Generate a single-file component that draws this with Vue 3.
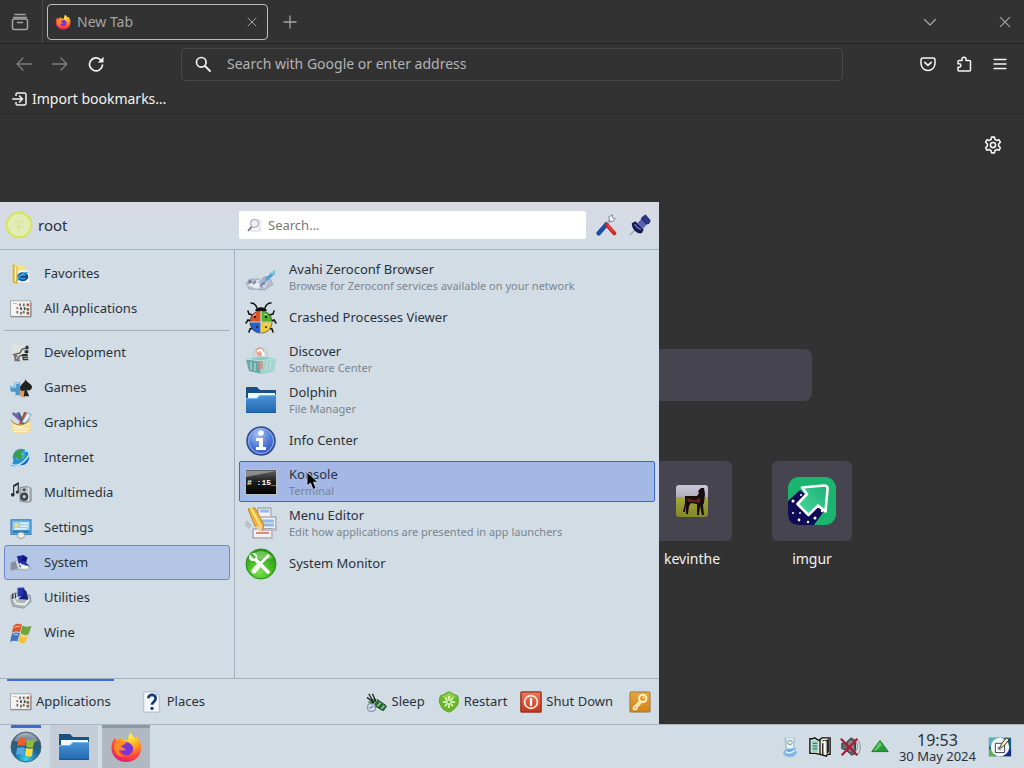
<script setup>
import { ref } from 'vue'

const places = [
  { icon: 'favorites', label: 'Favorites' },
  { icon: 'grid', label: 'All Applications' },
]
const categories = [
  { icon: 'development', label: 'Development' },
  { icon: 'games', label: 'Games' },
  { icon: 'graphics', label: 'Graphics' },
  { icon: 'internet', label: 'Internet' },
  { icon: 'multimedia', label: 'Multimedia' },
  { icon: 'settings', label: 'Settings' },
  { icon: 'system', label: 'System' },
  { icon: 'utilities', label: 'Utilities' },
  { icon: 'wine', label: 'Wine' },
]
const apps = [
  { icon: 'avahi', label: 'Avahi Zeroconf Browser', note: 'Browse for Zeroconf services available on your network' },
  { icon: 'bug', label: 'Crashed Processes Viewer' },
  { icon: 'discover', label: 'Discover', note: 'Software Center' },
  { icon: 'folder', label: 'Dolphin', note: 'File Manager' },
  { icon: 'info', label: 'Info Center' },
  { icon: 'konsole', label: 'Konsole', note: 'Terminal' },
  { icon: 'menuedit', label: 'Menu Editor', note: 'Edit how applications are presented in app launchers' },
  { icon: 'monitor', label: 'System Monitor' },
]
const power = [
  { icon: 'sleep', label: 'Sleep' },
  { icon: 'restart', label: 'Restart' },
  { icon: 'shutdown', label: 'Shut Down' },
]
const sites = [
  { icon: 'horse', label: 'kevinthe', size: 'small' },
  { icon: 'imgur', label: 'imgur', size: 'large' },
]
const tray = ['device', 'clipboard', 'muted', 'expand']

const category = ref('System')
const app = ref('Konsole')
const address = ref('')
const query = ref('')
const pageQuery = ref('')
</script>

<template>
  <div class="desktop">
    <svg class="defs" aria-hidden="true">
      <defs>
        <linearGradient id="gFolder" x1="0" y1="0" x2="0" y2="1"><stop offset="0" stop-color="#4a94d8" /><stop offset="1" stop-color="#2267ae" /></linearGradient>
        <radialGradient id="gFox" cx=".65" cy=".15" r=".9"><stop offset="0" stop-color="#fff04a" /><stop offset=".4" stop-color="#ffa01f" /><stop offset=".72" stop-color="#ff4a38" /><stop offset="1" stop-color="#e0186e" /></radialGradient>
        <radialGradient id="gOrb" cx=".5" cy=".9" r=".9"><stop offset="0" stop-color="#35d4f5" /><stop offset=".45" stop-color="#17689b" /><stop offset=".8" stop-color="#3d5568" /><stop offset="1" stop-color="#a4b5c0" /></radialGradient>
        <radialGradient id="gInfo" cx=".4" cy=".25" r=".8"><stop offset="0" stop-color="#a6c3f7" /><stop offset=".6" stop-color="#4b77d6" /><stop offset="1" stop-color="#3056b4" /></radialGradient>
        <radialGradient id="gGreen" cx=".45" cy=".75" r=".8"><stop offset="0" stop-color="#7be24b" /><stop offset=".6" stop-color="#3db21f" /><stop offset="1" stop-color="#238a10" /></radialGradient>
        <radialGradient id="gGlobe" cx=".4" cy=".35" r=".8"><stop offset="0" stop-color="#8fe0fa" /><stop offset=".5" stop-color="#1f8fd6" /><stop offset="1" stop-color="#0b3f96" /></radialGradient>
        <linearGradient id="gRed" x1="0" y1="0" x2="0" y2="1"><stop offset="0" stop-color="#ee7a5c" /><stop offset="1" stop-color="#c6341a" /></linearGradient>
        <linearGradient id="gGold" x1="0" y1="0" x2="0" y2="1"><stop offset="0" stop-color="#e9a83e" /><stop offset="1" stop-color="#cf8318" /></linearGradient>
        <linearGradient id="gTerm" x1="0" y1="0" x2="0" y2="1"><stop offset="0" stop-color="#666" /><stop offset=".5" stop-color="#1c1c1c" /><stop offset="1" stop-color="#000" /></linearGradient>
        <linearGradient id="gSky" x1="0" y1="0" x2="0" y2="1"><stop offset="0" stop-color="#c9c8d8" /><stop offset=".36" stop-color="#b3aebb" /><stop offset=".38" stop-color="#a6a83c" /><stop offset="1" stop-color="#838727" /></linearGradient>
        <linearGradient id="gArrow" x1="0" y1="1" x2="1" y2="0"><stop offset="0" stop-color="#4ad8a2" /><stop offset="1" stop-color="#1cb071" /></linearGradient>
      </defs>

      <symbol id="firefoxview" viewBox="0 0 18 18"><path d="M4 1.5h10M2.5 4.5h13" stroke="currentColor" stroke-width="1.4" stroke-linecap="round" /><rect x="1.5" y="6" width="15" height="10.5" rx="2" fill="none" stroke="currentColor" stroke-width="1.5" /><path d="M6.5 9.5h5" stroke="currentColor" stroke-width="1.6" stroke-linecap="round" /></symbol>
      <symbol id="close" viewBox="0 0 12 12"><path d="M2 2l8 8M10 2l-8 8" stroke="currentColor" stroke-width="1" stroke-linecap="round" /></symbol>
      <symbol id="plus" viewBox="0 0 14 14"><path d="M7 1v12M1 7h12" stroke="currentColor" stroke-width="1.3" stroke-linecap="round" /></symbol>
      <symbol id="chevron" viewBox="0 0 14 14"><path d="M1.500 4.500L7 10l5.500-5.500" fill="none" stroke="currentColor" stroke-width="1.300" stroke-linecap="round" stroke-linejoin="round" /></symbol>
      <symbol id="back" viewBox="0 0 16 16"><path d="M15.500 8H1M7 2L1 8l6 6" fill="none" stroke="currentColor" stroke-width="1.300" stroke-linecap="round" stroke-linejoin="round" /></symbol>
      <symbol id="forward" viewBox="0 0 16 16"><path d="M.5 8H15M9 2l6 6-6 6" fill="none" stroke="currentColor" stroke-width="1.300" stroke-linecap="round" stroke-linejoin="round" /></symbol>
      <symbol id="reload" viewBox="0 0 16 16"><path d="M13 4.200A6.500 6.500 0 1 0 14.500 9" fill="none" stroke="currentColor" stroke-width="1.700" stroke-linecap="round" /><path d="M15.500.8v5.700H9.800z" fill="currentColor" /></symbol>
      <symbol id="magnifier" viewBox="0 0 16 16"><circle cx="6.300" cy="6.300" r="4.800" fill="none" stroke="currentColor" stroke-width="1.700" /><path d="M10 10l5 5" stroke="currentColor" stroke-width="1.800" stroke-linecap="round" /></symbol>
      <symbol id="pocket" viewBox="0 0 16 16"><path d="M3 2h10a2 2 0 0 1 2 2v3.500a7 7 0 0 1-14 0V4a2 2 0 0 1 2-2z" fill="none" stroke="currentColor" stroke-width="1.500" /><path d="M4.800 6.300L8 9.300l3.200-3" fill="none" stroke="currentColor" stroke-width="1.600" stroke-linecap="round" stroke-linejoin="round" /></symbol>
      <symbol id="puzzle" viewBox="0 0 16 16"><path d="M6 4.500V3.200a2 2 0 0 1 4 0V4.500h3.500a1 1 0 0 1 1 1V14a1 1 0 0 1-1 1H3a1 1 0 0 1-1-1v-2.800h1.200a1.700 1.700 0 0 0 0-3.400H2V5.500a1 1 0 0 1 1-1z" fill="none" stroke="currentColor" stroke-width="1.500" stroke-linejoin="round" /></symbol>
      <symbol id="burger" viewBox="0 0 16 16"><path d="M2 3.500h12M2 8h12M2 12.500h12" stroke="currentColor" stroke-width="1.300" stroke-linecap="round" /></symbol>
      <symbol id="import" viewBox="0 0 16 16"><path d="M4 5V3.500A1.500 1.500 0 0 1 5.500 2h7A1.500 1.500 0 0 1 14 3.500v9a1.500 1.500 0 0 1-1.500 1.500h-7A1.500 1.500 0 0 1 4 12.500V11" fill="none" stroke="currentColor" stroke-width="1.500" /><path d="M.7 8H10M7.500 5l3 3-3 3" fill="none" stroke="currentColor" stroke-width="1.500" stroke-linecap="round" /></symbol>
      <symbol id="gear" viewBox="0 0 16 16"><path d="M6.700 1h2.600l.5 2.100 1.400.8 2.100-.6 1.300 2.300L13 7.100v1.800l1.600 1.500-1.300 2.300-2.100-.6-1.400.8-.5 2.100H6.700l-.5-2.100-1.400-.8-2.100.6-1.300-2.300L3 8.900V7.100L1.400 5.600l1.300-2.300 2.100.6 1.400-.8z" fill="none" stroke="currentColor" stroke-width="1.400" stroke-linejoin="round" /><circle cx="8" cy="8" r="2.300" fill="none" stroke="currentColor" stroke-width="1.400" /></symbol>
      <symbol id="firefox" viewBox="0 0 32 32"><path d="M4.500 7l3 3c1-2 2.500-3 4-3.500 0 1 .5 2 1.500 2.500h5c0-3 .5-6 3-8 .5 3 2.500 4 4.500 6 .8-.3 1-1.200.9-2 3.600 4 5.100 8 4.600 13C30.500 26 24 31 16 31S1.500 25 1.500 17c0-4 1-7 3-10z" fill="url(#gFox)" /><path d="M10 14c2-2 5-1 6-3 5 1 8 4 7 8s-5 6-8 5-5-3-5-6c2 1.500 4 1.500 6 0-3 0-4-2-6-4z" fill="#7a35d8" /><path d="M7 10c4-1 6 1 9 2-1 2-4 2-5 3 1 2 3 3 5 3-2 2-5 2-7 0-1 4 2 7 6 7-6 2-11-3-11-9 0-2 1-4 3-6z" fill="#ff8a28" /></symbol>

      <symbol id="horse" viewBox="0 0 32 32"><rect width="32" height="32" rx="3" fill="url(#gSky)" /><path d="M9 11h12l2-3-1-2 3-3h3l1 6-1 9-1 2 1 10h-2l-2-9-1 9h-2V19l-6-1-2 3-1 8h-2v-9l-1 7H7l2-9z" fill="#180c0c" /><path d="M11 13l7 2 6-2v5l-6-1h-6z" fill="#671b1b" /></symbol>
      <symbol id="imgur" viewBox="0 0 48 48"><rect width="48" height="48" rx="11" fill="#1cb570" /><path d="M0 24l12-11 24 21-10 14H11C4 48 0 44 0 37z" fill="#0f0b54" /><path d="M14 10.500l22-2q4 0 3.500 4l-2 22-7.500-6-9.500 9.500-11-11L19 17z" fill="url(#gArrow)" stroke="#fff" stroke-width="2.600" stroke-linejoin="round" /><g fill="#fff"><circle cx="5" cy="24" r="1.500" /><circle cx="13" cy="18" r="1" /><circle cx="5" cy="36" r="1" /><circle cx="11" cy="43" r="1.400" /><circle cx="20" cy="45" r="1.200" /><circle cx="27" cy="41" r="1.500" /><circle cx="34" cy="34" r="1.200" /><circle cx="12" cy="36" r=".9" /></g></symbol>

      <symbol id="avatar" viewBox="0 0 32 32"><circle cx="16" cy="16" r="14" fill="#e3ecb8" stroke="#d5e657" stroke-width="2.500" /><path d="M11 13c3-2 7-2 10 0M16 12v9M13 18h6" fill="none" stroke="#d9e690" stroke-width="1.500" /></symbol>
      <symbol id="seeker" viewBox="0 0 16 16"><rect x="5" y="3" width="9" height="11" fill="#f8f8fb" stroke="#d6d6e0" /><circle cx="8.500" cy="6.500" r="4" fill="#f0f0f8" stroke="#9d9bb4" /><path d="M5.500 10L2 14" stroke="#6d6b76" stroke-width="1.600" /></symbol>
      <symbol id="tools" viewBox="0 0 24 24"><path d="M13 11l5-6" stroke="#a9b2ba" stroke-width="3" /><path d="M15 3l4-2 0 3 3 1-2 3-4 0z" fill="#eef1f4" stroke="#7b858d" /><path d="M11 9l3 4" stroke="#566572" stroke-width="2" /><path d="M12 12L4 21" stroke="#164fa3" stroke-width="5" stroke-linecap="round" /><path d="M13 12l8 9" stroke="#d42628" stroke-width="4.500" stroke-linecap="round" /><path d="M14 12l6 7" stroke="#f46b62" stroke-width="1" /></symbol>
      <symbol id="pin" viewBox="0 0 24 24"><path d="M7 17l-6 6" stroke="#a4a9b2" stroke-width="1.500" /><path d="M3 10l4-2 9 9-2 4c-5 1-11-4-11-11z" fill="#15194e" /><path d="M9 10l5-5 6 6-5 5z" fill="#5862b8" /><path d="M14 4l4-3 5 6-1 3-3 1-5-5z" fill="#2e378b" stroke="#181e59" /><path d="M6 11c2 3 4 5 7 6" stroke="#737fd0" stroke-width="1.500" fill="none" /></symbol>

      <symbol id="favorites" viewBox="0 0 24 24"><path d="M3 1l8 2h5v18H9l-6 2z" fill="#f5e17a" /><path d="M3 1l5 3v19l-5-2z" fill="#d3af36" /><path d="M5 3l2 1v17l-2-1z" fill="#fff3ae" /><rect x="9" y="8" width="12" height="13" fill="#f6f8fa" /><ellipse cx="14" cy="15" rx="5" ry="4" fill="#3d9ade" stroke="#154f94" stroke-width="2" /><path d="M10 15h9" stroke="#143f7a" stroke-width="2" /><path d="M8 20C8 15 14 10 20 10" stroke="#3bb6e8" stroke-width="1.500" fill="none" /></symbol>
      <symbol id="grid" viewBox="0 0 24 20"><rect x=".5" y="1" width="22" height="17" fill="#f4f4f1" stroke="#a4a6ab" /><path d="M1 18.500h22V3" fill="none" stroke="#807c83" /><path d="M3 4h4l2 2" fill="none" stroke="#b6bac2" /><g><path d="M10 4h2v3h-2zM7 12h2v3H7z" fill="#71758a" /><path d="M14 4h2v3h-2zM14 12h2v3h-2z" fill="#65744d" /><path d="M18 4h3v3h-3zM7 8h2v2H7z" fill="#ab5b45" /><path d="M11 8h2v3h-2zM15 8h2v3h-2z" fill="#444d60" /><path d="M11 13h2v3h-2zM18 9h3v3h-3zM18 13h3v3h-3z" fill="#89634c" /></g></symbol>
      <symbol id="development" viewBox="0 0 24 24"><rect x="2" y="3" width="18" height="17" fill="#e0e2df" /><path d="M3 14l8-2 2-4 7-2M7 20l4-5 8-2" stroke="#575c59" stroke-width="1.500" fill="none" /><path d="M17 4h3v4h-3zM16 9h4v3h-4zM13 13h6l1 7h-6z" fill="#2b302e" /><path d="M4 13l5 2-3 3 5 1v2H5z" fill="#6e7572" /><path d="M14 16h5M15 18h5" stroke="#a9b7ad" /></symbol>
      <symbol id="games" viewBox="0 0 24 24"><path d="M0 10h5V6h6v5h4v5h-4v4H6v-4H1z" fill="#4b98d3" /><path d="M1 11h5V7h4" fill="none" stroke="#9ed2f2" stroke-width="1.500" /><path d="M11 12l6 2-1 9-5-2z" fill="#d99d6a" /><path d="M17 2c0 4-6 6-6 10 0 4 4 4 5 2l-1 7h6l-3-7c2 2 6 0 6-3 0-4-7-5-7-9z" fill="#202321" /></symbol>
      <symbol id="graphics" viewBox="0 0 24 24"><path d="M3 1l13 12M6 2l10 10" stroke="#7460ab" stroke-width="3" /><path d="M17 0l-6 14" stroke="#b1502c" stroke-width="3" /><path d="M9 0l6 13" stroke="#315d8c" stroke-width="2" /><path d="M19 1l4 2-6 9-4-1z" fill="#e7f2fa" stroke="#779bb8" /><path d="M1 9c7 7 16 5 21-1l1 10c0 3-3 5-7 5H6c-3 0-5-2-5-5z" fill="#f2dc98" /><path d="M3 14c5 3 12 2 18-1M3 18h18M4 21h15" stroke="#fff1bd" stroke-width="1.500" fill="none" /><path d="M1 9c7 8 15 6 21-1" stroke="#9b6d32" fill="none" /></symbol>
      <symbol id="internet" viewBox="0 0 24 24"><circle cx="12" cy="11" r="9" fill="url(#gGlobe)" /><path d="M7 4c4-2 7-1 8 1l-3 2 2 3-3 5-3-3-4-1c0-3 1-5 3-7zM16 9l3 1-2 5z" fill="#3c9e48" /><path d="M1 20c4 4 19-3 21-14-3 6-13 12-18 9z" fill="#318bd9" /><path d="M1 17c3 7 17 1 21-12M16 5l7-3" fill="none" stroke="#b7e6fb" stroke-width="1.700" /></symbol>
      <symbol id="multimedia" viewBox="0 0 24 24"><path d="M4 14V4l5-3v9M4 5l5-3" stroke="#26292c" stroke-width="1.200" fill="none" /><circle cx="3" cy="14" r="2" fill="#282b2d" /><circle cx="8" cy="11" r="1.700" fill="#282b2d" /><path d="M11 6l9-1 3 2v14l-4 1-8-1z" fill="#b9bfc3" stroke="#7b8185" /><path d="M20 5v16" stroke="#e5e9ec" /><circle cx="15.500" cy="16" r="4" fill="#4f5559" stroke="#252c31" /><circle cx="15.500" cy="16" r="1.500" fill="#d3dce1" /><circle cx="15.500" cy="8.500" r="1.500" fill="#373e42" /></symbol>
      <symbol id="settings" viewBox="0 0 24 24"><rect x="1" y="3" width="22" height="16" fill="#62aadd" stroke="#397baf" /><path d="M3 5h18v10H3z" fill="#9bd0ee" /><circle cx="7" cy="9" r="2.500" fill="#efd97d" /><path d="M11 7h9M11 10h9M5 13h13" stroke="#f4fbff" stroke-width="1.500" /><path d="M3 16h18" stroke="#267fbd" stroke-width="3" /><ellipse cx="12" cy="20" rx="4" ry="3.500" fill="#eceae3" stroke="#949999" /></symbol>
      <symbol id="system" viewBox="0 0 24 24"><path d="M1 12l7-3 6 4 9 5-5 2-8-1-9 1z" fill="#d5dce0" stroke="#9aa4ad" /><path d="M1 12l5-2 3 8-8 2z" fill="#888f9e" /><path d="M7 4l7-1 3 8-8 2z" fill="#1d269d" stroke="#b9caef" /><path d="M14 3l5 3-2 8-4-4z" fill="#0b1681" /><path d="M10 14l5-5 7 7-8-3-3 4z" fill="#253799" /><path d="M11 13l4 4 5-1" stroke="#fff" stroke-width="2" fill="none" /></symbol>
      <symbol id="utilities" viewBox="0 0 24 24"><path d="M1 9l5-3 16 3 1 7-8 7-12-2-2-8z" fill="#aeb6b9" stroke="#8b969c" /><path d="M2 9l6 5 8-4-5-4z" fill="#e7eef2" /><path d="M3 12l4 6 9 1 5-6" fill="none" stroke="#ecefef" stroke-width="2" /><path d="M8 1l7-1 2 10-9 1z" fill="#2631ac" stroke="#91a8da" /><path d="M14 1l4 4 2 9-11-1 6-5z" fill="#15227d" /><path d="M3 7v6M6 7v5" stroke="#2f3639" stroke-width="1.500" /></symbol>
      <symbol id="wine" viewBox="0 0 24 24"><path d="M4 4c3-3 6-2 9-1l-2 8c-3-1-6-1-9 1z" fill="#dd5426" /><path d="M13.500 4c3 1 6 2 10 0l-3 9c-3 2-6 1-9-1z" fill="#6fa53a" /><path d="M2 13c3-2 6-2 9-1l-3 9c-3-1-5-1-8 1z" fill="#3f76bf" /><path d="M11.500 13c3 1 5 2 8.500 0l-3 9c-3 2-5 1-8-1z" fill="#f2c230" /><path d="M5 6c2-2 4-1 6-1M12 15l6 1M4 14c2-1 3-1 5 0" stroke="#fff" stroke-width="1.500" opacity=".5" fill="none" /></symbol>

      <symbol id="avahi" viewBox="0 0 32 32"><path d="M1 22l5-4h19l3 5-8 6-16-1z" fill="#b8bfcc" stroke="#a4aabb" /><path d="M4 18l5 4-6 3zM13 20l5-3 4 7-6 2z" fill="#737c93" /><path d="M2 24l10-5 8 3-8 6z" fill="#e8ebf0" /><path d="M12 22l7-8 5 1-4 11z" fill="#aab7cf" stroke="#e7edf2" /><path d="M20 17L30 9v4l-9 8z" fill="#55a4cf" /><path d="M24 12l6-3-1 5z" fill="#86cbe0" /><path d="M8 23l3-3M15 25l5-4" stroke="#7880a8" stroke-width="2" /></symbol>
      <symbol id="bug" viewBox="0 0 32 32"><g fill="none" stroke="#111" stroke-width="1.500" stroke-linecap="round"><path d="M12 6C11 3 9 1 6 1M20 6c1-3 3-5 6-5M8 13L4 12l-1-3M24 13l4-1 1-3M6 19l-3-1-2 3M26 19l3-1 2 3M9 26l-4 1-1 3M23 26l4 1 1 3" /></g><path d="M10 9c1-5 11-5 12 0z" fill="#111" /><path d="M16 9v11H5c0-6 4-11 11-11z" fill="#e1542a" stroke="#222" stroke-width=".6" /><path d="M16 9v11h11c0-6-4-11-11-11z" fill="#50b42c" stroke="#222" stroke-width=".6" /><path d="M5 20h11v11C9 31 5 26 5 20z" fill="#2762ca" stroke="#222" stroke-width=".6" /><path d="M27 20H16v11c7 0 11-5 11-11z" fill="#f5cc30" stroke="#222" stroke-width=".6" /><path d="M16 9v22M5 20h22" stroke="#f3eeda" stroke-width="1.200" /><g fill="#26211f"><circle cx="10" cy="15" r="1.200" /><circle cx="21" cy="15" r="1.200" /><circle cx="12" cy="25" r="1" /><circle cx="21" cy="25" r="1" /></g><path d="M8 14l3-2M19 12l3 1M20 23l2-1" stroke="#fff" opacity=".6" /></symbol>
      <symbol id="discover" viewBox="0 0 32 32"><path d="M9 18v-7c0-8 13-8 13 0v7" fill="none" stroke="#c2d0d0" stroke-width="2" /><path d="M11 9h8v9h-8z" fill="#eef0e8" /><path d="M11 6l4-2 4 3-2 6-5 1z" fill="#e7a083" /><path d="M12 8l4-1 3 6" stroke="#fff" stroke-width="2" fill="none" /><path d="M1 16l14-3 16 2-2 13-13 3-12-3z" fill="#8ec9c4" /><path d="M1 16l14 2v12L4 28z" fill="#67a5a6" /><path d="M15 18l16-3-2 13-13 2z" fill="#a2d6cf" /><path d="M1 16l14-3 16 2-15 3z" fill="none" stroke="#c1e2de" /><path d="M13 18h5v8h-5z" fill="#c98e80" opacity=".7" /><path d="M6 19v8M10 20v8M22 19l-1 9M26 18l-1 9" stroke="#c4e5df" /></symbol>
      <symbol id="folder" viewBox="0 0 32 28"><path d="M1 1h11l3 3h16v22H1z" fill="#195183" /><path d="M3 7h27v12H3z" fill="#edf8ff" /><path d="M1 12h11l3-3h16v18H1z" fill="url(#gFolder)" /><path d="M1 12.500h11l3-3h16" fill="none" stroke="#77b6ed" /><path d="M1 26.500h30" stroke="#195995" /></symbol>
      <symbol id="info" viewBox="0 0 32 32"><circle cx="16" cy="16" r="14" fill="url(#gInfo)" stroke="#304b8c" stroke-width="1.500" /><circle cx="16" cy="16" r="12.500" fill="none" stroke="#97b4ef" /><circle cx="16" cy="8" r="2.800" fill="#fff" /><path d="M11 13h7v9h3v3H11v-3h3v-6h-3z" fill="#fff" /></symbol>
      <symbol id="konsole" viewBox="0 0 32 26"><rect x=".5" y=".5" width="31" height="25" fill="url(#gTerm)" stroke="#bbbfc6" /><path d="M1 2h30L1 8z" fill="#aaa" opacity=".65" /><text x="2" y="16" class="term"># :15_</text></symbol>
      <symbol id="menuedit" viewBox="0 0 32 32"><path d="M1 13l6 5-3 4-4-3z" fill="#b9c2c8" /><path d="M13 1h13v9H13zM14 10h17v12H14zM8 22h19v9H8z" fill="#f1f1ee" stroke="#858c98" /><path d="M26 2v8H13M31 13v10H14M27 23v8H9" stroke="#b9bcc5" stroke-width="2" fill="none" /><path d="M15 4h9M16 14h13M16 18h13" stroke="#95b9eb" stroke-width="3" /><path d="M11 26h13" stroke="#d98a78" stroke-width="2" /><path d="M3 2l7-1 9 17-2 6-7-5z" fill="#f2b337" stroke="#bf812c" /><path d="M6 1l10 19" stroke="#ffe78a" stroke-width="2" /><path d="M10 20l7-2v7z" fill="#ead1a3" /></symbol>
      <symbol id="monitor" viewBox="0 0 32 32"><circle cx="16" cy="16" r="15" fill="url(#gGreen)" stroke="#278b17" /><path d="M4 10c5-9 19-9 24 0-7 2-12 2-24 0z" fill="#bfeab0" opacity=".45" /><path d="M9 10l14 14" stroke="#fff" stroke-width="3.500" stroke-linecap="round" /><path d="M24 7L13 18" stroke="#fff" stroke-width="2.500" /><path d="M15 16l-6 7" stroke="#f6faf2" stroke-width="5" stroke-linecap="round" /><circle cx="8" cy="9" r="4" fill="#fff" /><path d="M5 5l5 5" stroke="#54b73a" stroke-width="3" /></symbol>

      <symbol id="places" viewBox="0 0 20 24"><path d="M1 1h13l4 4v18H1z" fill="#f5f8fa" stroke="#a7b7c6" /><path d="M14 1v4h4" fill="#bed3e9" /><path d="M6 8c0-5 8-5 8 0 0 4-4 4-4 7" fill="none" stroke="#17397e" stroke-width="3" /><circle cx="10" cy="19" r="1.800" fill="#17397e" /></symbol>
      <symbol id="sleep" viewBox="0 0 24 24"><path d="M2 12l7-4 14 9-4 5z" fill="#226838" /><path d="M4 12l4-3M8 14l4-4M12 17l4-4M16 20l4-4" stroke="#88c879" stroke-width="2" /><path d="M3 3l5 9M7 3l4 9M1 7l8 6" stroke="#222b24" stroke-width="1.500" /><path d="M12 9l10 7M7 14l11 7" stroke="#1b2923" /><rect x="2" y="14" width="8" height="8" rx="2" fill="#dce5f5" stroke="#61718c" /><path d="M4 19l4-3" stroke="#8295b8" stroke-width="2" /></symbol>
      <symbol id="restart" viewBox="0 0 24 24"><path d="M3 5c5-1 6-4 9-4s4 3 9 4c2 3 2 9-1 12-2 3-5 5-8 6-4-1-7-3-9-7-2-3-2-8 0-11z" fill="#69b728" stroke="#5aa422" /><path d="M4 6c5-1 6-4 8-4s4 3 8 4c-5 4-12 4-16 0z" fill="#b2e26a" opacity=".6" /><path d="M12 6v4M12 14v4M6 12h4M14 12h4M8 8l2 2M14 14l2 2M16 8l-2 2M10 14l-2 2" stroke="#f5ffdf" stroke-width="1.600" stroke-linecap="round" /></symbol>
      <symbol id="shutdown" viewBox="0 0 24 24"><rect x="1" y="1" width="22" height="22" rx="1" fill="url(#gRed)" stroke="#94311e" stroke-width="1.500" /><circle cx="12" cy="12" r="7" fill="none" stroke="#fff2ec" stroke-width="1.800" /><path d="M12 7.500v9" stroke="#fff" stroke-width="2.500" /></symbol>
      <symbol id="key" viewBox="0 0 24 24"><rect x="1" y="1" width="22" height="22" rx="1" fill="url(#gGold)" stroke="#98743c" /><circle cx="15" cy="8" r="4" fill="none" stroke="#fff0c5" stroke-width="2.200" /><path d="M12 11l-7 7v2h3l1-3 4-4" fill="none" stroke="#fff0c5" stroke-width="1.800" /><circle cx="16" cy="7" r="1" fill="#fff0c5" /></symbol>
      <symbol id="start" viewBox="0 0 32 32"><circle cx="16" cy="16" r="15" fill="url(#gOrb)" stroke="#4c6272" /><path d="M4 10C9 0 23 0 28 10c-8 3-16 1-24 0z" fill="#c0cdd5" opacity=".5" /><path d="M9 8c3-2 5-1 7 0l-1 7c-3-1-5-1-8 0z" fill="#e95f25" /><path d="M17 9c3 1 5 1 8-1l-2 8c-3 1-5 1-7-1z" fill="#8fbd32" /><path d="M7 17c3-1 5-1 8 0l-1 7c-3-1-5-1-8 0z" fill="#51a9e4" /><path d="M16 17c3 1 5 1 7 0l-1 8c-3 1-5 1-7-1z" fill="#ffd83c" /></symbol>
      <symbol id="device" viewBox="0 0 24 24"><path d="M6 2h11v13l3 3-3 4c-5 3-11 0-13-3l3-4z" fill="#8ac0e8" /><path d="M8 2h8v12H8z" fill="#e9f2ef" stroke="#b6cbd2" /><circle cx="12" cy="7" r="2.500" fill="#e2e7d2" stroke="#7599b9" /><path d="M8 15l10-2v5c-4 5-11 4-13-1z" fill="#69abe0" /><path d="M7 17c4 3 9 1 10-2" fill="none" stroke="#d4effa" stroke-width="2" /></symbol>
      <symbol id="clipboard" viewBox="0 0 24 24"><path d="M1 3h3l2-1 5 3 3-3h9v18h-3l-1 2-7-2-5-1H1z" fill="#e8e8dd" stroke="#111" stroke-width="1.500" /><path d="M3 5h7v13H3z" fill="#9fd7c5" /><path d="M4 8h5M4 11h5M4 14h5" stroke="#245c57" /><path d="M12 4v16M15 5h5v14M15 8v13M21 3v15" stroke="#222" stroke-width="1.500" fill="none" /><path d="M17 5v13" stroke="#fff" stroke-width="1.500" /></symbol>
      <symbol id="muted" viewBox="0 0 24 24"><path d="M3 8l5-1 5-5 5 3v14l-4 2-7-6-4-1z" fill="#666d70" stroke="#30383d" /><ellipse cx="13" cy="11" rx="4" ry="7" fill="#848889" stroke="#444" /><path d="M18 6c3 3 3 7 0 11M21 5c3 5 3 10 0 15" fill="none" stroke="#949a9e" stroke-width="1.200" /><path d="M2 3l18 18M20 3L3 21" stroke="#b71537" stroke-width="2.500" /></symbol>
      <symbol id="expand" viewBox="0 0 24 24"><path d="M12 5l9 12H3z" fill="#279c37" stroke="#147527" stroke-linejoin="round" /><path d="M5 16l7-10 2 4-7 6z" fill="#5bd05c" /></symbol>
      <symbol id="peek" viewBox="0 0 26 24"><rect x="1" y="2" width="24" height="20" fill="#145c7c" /><path d="M1 2h12L1 12z" fill="#54b2bf" /><path d="M25 22H13l12-8z" fill="#162c81" /><path d="M1 13v9h9z" fill="#5fae5b" /><circle cx="13" cy="12" r="10" fill="#f2f5f4" /><path d="M8 8h10v10H8z" fill="#fff" stroke="#343a41" /><path d="M11 11v4h4" fill="none" stroke="#8b9197" /><path d="M12 14l3-6 5-6 3 2-6 7z" fill="#f8eeb5" stroke="#24282b" /></symbol>
    </svg>

    <main class="browser">
      <header class="tabbar">
        <button class="view" aria-label="Recent browsing"><svg class="i18"><use href="#firefoxview" /></svg></button>
        <div class="tab">
          <svg class="i16"><use href="#firefox" /></svg><span>New Tab</span>
          <button aria-label="Close tab"><svg class="i12"><use href="#close" /></svg></button>
        </div>
        <button class="add" aria-label="Open a new tab"><svg class="i14"><use href="#plus" /></svg></button>
        <button class="push" aria-label="List all tabs"><svg class="i14"><use href="#chevron" /></svg></button>
        <button class="quit" aria-label="Close window"><svg class="i14"><use href="#close" /></svg></button>
      </header>
      <nav class="toolbar">
        <div class="navbuttons">
          <button class="dim" aria-label="Back"><svg class="i16"><use href="#back" /></svg></button>
          <button class="dim" aria-label="Forward"><svg class="i16"><use href="#forward" /></svg></button>
          <button aria-label="Reload"><svg class="i16"><use href="#reload" /></svg></button>
        </div>
        <label class="address">
          <svg class="i16"><use href="#magnifier" /></svg>
          <input v-model="address" type="text" aria-label="Address" placeholder="Search with Google or enter address" />
        </label>
        <div class="extras">
          <button aria-label="Save to Pocket"><svg class="i16"><use href="#pocket" /></svg></button>
          <button aria-label="Extensions"><svg class="i16"><use href="#puzzle" /></svg></button>
          <button aria-label="Application menu"><svg class="i16"><use href="#burger" /></svg></button>
        </div>
      </nav>
      <div class="bookmarks">
        <button><svg class="i16"><use href="#import" /></svg>Import bookmarks…</button>
      </div>
      <section class="page">
        <button class="customize" aria-label="Personalize new tab"><svg class="i18"><use href="#gear" /></svg></button>
        <input v-model="pageQuery" class="pagesearch" type="text" aria-label="Search the web" />
        <div class="sites">
          <a v-for="s in sites" :key="s.label" href="#" class="site">
            <span class="tile"><svg :class="s.size"><use :href="'#' + s.icon" /></svg></span>
            {{ s.label }}
          </a>
        </div>
      </section>
    </main>

    <aside class="launcher">
      <header class="head">
        <button class="user"><svg class="i28"><use href="#avatar" /></svg>root</button>
        <div class="find">
          <label class="searchbox">
            <svg class="i16"><use href="#seeker" /></svg>
            <input v-model="query" type="text" aria-label="Search applications" placeholder="Search..." />
          </label>
          <button aria-label="Configure"><svg class="i22"><use href="#tools" /></svg></button>
          <button aria-label="Keep open"><svg class="i22"><use href="#pin" /></svg></button>
        </div>
      </header>
      <div class="body">
        <nav class="side">
          <button v-for="c in places" :key="c.label" class="cat" @click="category = c.label">
            <svg class="i22"><use :href="'#' + c.icon" /></svg><span class="name">{{ c.label }}</span>
          </button>
          <hr />
          <button v-for="c in categories" :key="c.label" class="cat" :class="{ on: category === c.label }" @click="category = c.label">
            <svg class="i22"><use :href="'#' + c.icon" /></svg><span class="name">{{ c.label }}</span>
          </button>
        </nav>
        <div class="apps">
          <button v-for="a in apps" :key="a.label" class="app" :class="{ on: app === a.label }" @mouseenter="app = a.label">
            <svg class="i32"><use :href="'#' + a.icon" /></svg>
            <span class="words"><span :class="{ name: !a.note }">{{ a.label }}</span><small v-if="a.note">{{ a.note }}</small></span>
          </button>
        </div>
      </div>
      <footer class="foot">
        <button class="switch on"><svg class="i22"><use href="#grid" /></svg><span class="name">Applications</span></button>
        <button class="switch"><svg class="i22"><use href="#places" /></svg><span class="name">Places</span></button>
        <div class="power">
          <button v-for="p in power" :key="p.label"><svg class="i22"><use :href="'#' + p.icon" /></svg><span class="name">{{ p.label }}</span></button>
          <button class="leave" aria-label="Leave"><svg class="i22"><use href="#key" /></svg></button>
        </div>
      </footer>
    </aside>

    <footer class="taskbar">
      <button class="task start" aria-label="Application launcher"><svg class="i32"><use href="#start" /></svg></button>
      <button class="task files" aria-label="Dolphin"><svg class="i32"><use href="#folder" /></svg></button>
      <button class="task active" aria-label="Firefox"><svg class="i32"><use href="#firefox" /></svg></button>
      <div class="tray">
        <button v-for="t in tray" :key="t" :aria-label="t"><svg class="i22"><use :href="'#' + t" /></svg></button>
      </div>
      <button class="clock"><time class="time">19:53</time><span>30 May 2024</span></button>
      <button class="peek" aria-label="Show desktop"><svg class="i24"><use href="#peek" /></svg></button>
    </footer>

    <svg class="cursor" viewBox="0 0 13 20" aria-hidden="true"><path d="M1 1v14l3.500-3 2.500 6.500 3-1.300-2.500-6H12z" fill="#000" stroke="#dfe6f4" stroke-width=".8" /></svg>
  </div>
</template>

<style>
body {
  background: #323232;
}
</style>

<style scoped>
.desktop {
  position: relative;
  display: flex;
  flex-direction: column;
  min-height: 100vh;
  overflow: hidden;
  font: 13px/18px "Noto Sans", "Open Sans", sans-serif;
  color: #29323c;
}
.desktop *, .desktop { box-sizing: border-box; }
.defs { position: absolute; width: 0; height: 0; }
svg { flex: none; display: block; }
button, input {
  margin: 0;
  padding: 0;
  border: 0;
  background: none;
  color: inherit;
  font: inherit;
  text-align: left;
}
input { min-width: 0; outline: 0; }
button { display: flex; align-items: center; flex: none; white-space: nowrap; }
.i12 { width: 12px; height: 12px; }
.i14 { width: 14px; height: 14px; }
.i16 { width: 16px; height: 16px; }
.i18 { width: 18px; height: 18px; }
.i22 { width: 22px; height: 22px; }
.i24 { width: 24px; height: 24px; }
.i28 { width: 28px; height: 28px; }
.i32 { width: 32px; height: 32px; }
.term { font: bold 8px "Liberation Mono", monospace; fill: #fff; }

.browser {
  flex: 1;
  display: flex;
  flex-direction: column;
  background: #323232;
  color: #f4f4f4;
  font-size: 14px;
}
.tabbar {
  display: flex;
  align-items: center;
  height: 44px;
  padding-right: 12px;
  border-bottom: 1px solid #262626;
  color: #a4a4a4;
}
.view { width: 43px; height: 43px; padding-left: 11px; border-right: 1px solid #484848; }
.tab {
  display: flex;
  align-items: center;
  gap: 6px;
  width: 221px;
  height: 36px;
  margin-left: 4px;
  padding: 0 9px 0 7px;
  border: 1px solid #bcbcbc;
  border-radius: 4px;
}
.tab span { flex: 1; }
.add { margin-left: 15px; }
.push { margin-left: auto; }
.quit { margin-left: 61px; }
.toolbar { display: flex; align-items: center; height: 40px; }
.navbuttons { display: flex; gap: 20px; width: 181px; padding-left: 16px; }
.dim { color: #7d7d7d; }
.address {
  flex: 1;
  display: flex;
  align-items: center;
  gap: 16px;
  height: 33px;
  padding: 0 13px;
  border: 1px solid #484848;
  border-radius: 4px;
}
.address input { flex: 1; }
.address input::placeholder { color: #b4b4b4; opacity: 1; }
.extras { display: flex; justify-content: flex-end; gap: 20px; width: 181px; padding-right: 16px; }
.bookmarks {
  display: flex;
  height: 30px;
  padding-left: 12px;
  border-bottom: 1px solid #282828;
}
.bookmarks button { gap: 4px; }
.page { flex: 1; display: flex; flex-direction: column; align-items: center; padding: 22px; }
.customize { align-self: flex-end; }
.pagesearch {
  width: 600px;
  max-width: 100%;
  height: 52px;
  margin-top: 195px;
  border-radius: 8px;
  background: #46444f;
}
.sites { display: flex; justify-content: flex-end; width: 720px; max-width: 100%; margin-top: 60px; }
.site {
  display: flex;
  flex-direction: column;
  align-items: center;
  gap: 9px;
  width: 120px;
  color: inherit;
  text-decoration: none;
}
.tile {
  display: grid;
  place-items: center;
  width: 80px;
  height: 80px;
  border-radius: 6px;
  background: #46444f;
}
.small { width: 32px; height: 32px; }
.large { width: 48px; height: 48px; }

.launcher {
  position: absolute;
  left: 0;
  bottom: 44px;
  display: flex;
  flex-direction: column;
  width: 659px;
  background: #d2dce5;
  border-radius: 0 3px 0 0;
}
.head {
  display: flex;
  align-items: center;
  height: 48px;
  padding-bottom: 2px;
  border-bottom: 1px solid #a4b0bd;
  background: linear-gradient(#d8dae6, #d2dce5);
}
.name { padding-bottom: 2px; }
.user { gap: 5px; width: 235px; padding-left: 5px; font-size: 15px; }
.find { flex: 1; display: flex; align-items: center; gap: 12px; padding: 0 8px 0 4px; }
.searchbox {
  flex: 1;
  display: flex;
  align-items: center;
  gap: 6px;
  height: 28px;
  margin-right: -3px;
  padding: 0 7px;
  border-radius: 2px;
  background: #fff;
}
.searchbox input { flex: 1; }
.searchbox input::placeholder { color: #777; opacity: 1; }
.body { display: flex; }
.side { width: 235px; padding: 6px 4px 28px; border-right: 1px solid #a4b0bd; }
.cat {
  gap: 12px;
  width: 100%;
  height: 35px;
  padding: 0 5px;
  border: 1px solid transparent;
  border-radius: 3px;
}
.cat.on { background: #b4c6e6; border-color: #6d86d2; }
hr { height: 1px; margin: 4px 0; border: 0; background: #a4b0bd; }
.apps { flex: 1; padding: 6px 4px 0; }
.app {
  gap: 12px;
  width: 100%;
  height: 41px;
  padding: 0 5px;
  border: 1px solid transparent;
  border-radius: 2px;
}
.app.on { background: #a3b8e6; border-color: #3c66d8; }
.words { display: flex; flex-direction: column; }
.words small { font-size: 11px; line-height: 15px; color: #7b8590; }
.foot { display: flex; height: 46px; padding: 0 8px 0 7px; border-top: 1px solid #a4b0bd; }
.foot button { gap: 4px; }
.foot .switch { gap: 4px; padding: 0 3px; }
.foot .switch + .switch { margin-left: 24px; }
.switch.on { box-shadow: inset 0 2px #4369d6; }
.power { display: flex; gap: 13px; margin-left: auto; }
.power .leave { margin-left: 3px; }

.taskbar {
  position: relative;
  display: flex;
  align-items: center;
  height: 44px;
  padding-right: 12px;
  border-top: 1px solid #a9b5c1;
  background: #d2dce5;
}
.task { justify-content: center; width: 48px; height: 43px; margin-right: 4px; }
.start { width: 30px; margin: 0 9px 0 11px; box-shadow: inset 0 3px #4369d6; }
.files { background: #c5ced8; }
.active { background: #b0b8c2; box-shadow: inset 0 3px #8f97a3; }
.tray { display: flex; gap: 8px; margin-left: auto; }
.clock { flex-direction: column; margin: 0 12px 0 8px; }
.time { font-size: 16px; }
.clock span { line-height: 14px; }
.cursor { position: absolute; left: 306px; top: 471px; width: 13px; height: 20px; }
</style>
